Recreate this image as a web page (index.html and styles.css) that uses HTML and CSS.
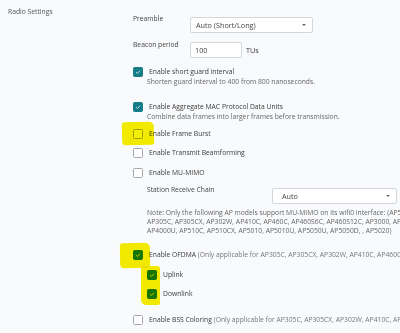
FILE: index.html
```
<!DOCTYPE html>
<html lang="en">
<head>
    <meta charset="UTF-8">
    <title>Radio Settings</title>
    <link rel="stylesheet" href="styles.css">
</head>
<body>
<div class="page">
    <div class="section">
        <div class="section-title">Radio Settings</div>
        <div class="fields">
            <div class="field field-first">
                <div class="field-label">Preamble</div>
                <div class="select select-preamble">Auto (Short/Long)<span class="caret"></span></div>
            </div>
            <div class="field">
                <div class="field-label">Beacon period</div>
                <div class="input">100</div>
                <span class="unit">TUs</span>
            </div>

            <div class="check check-guard">
                <span class="box checked"><svg viewBox="0 0 10 10"><path d="M2.6 5.2 L4.3 6.8 L7.5 3.4"/></svg></span>
                <span class="check-text">Enable short guard interval</span>
            </div>
            <div class="desc">Shorten guard interval to 400 from 800 nanoseconds.</div>

            <div class="check check-ampdu">
                <span class="box checked"><svg viewBox="0 0 10 10"><path d="M2.6 5.2 L4.3 6.8 L7.5 3.4"/></svg></span>
                <span class="check-text">Enable Aggregate MAC Protocol Data Units</span>
            </div>
            <div class="desc">Combine data frames into larger frames before transmission.</div>

            <div class="check check-burst">
                <span class="box"></span>
                <span class="check-text">Enable Frame Burst</span>
            </div>
            <div class="check">
                <span class="box"></span>
                <span class="check-text">Enable Transmit Beamforming</span>
            </div>
            <div class="check check-mimo">
                <span class="box"></span>
                <span class="check-text">Enable MU-MIMO</span>
            </div>

            <div class="field field-sub">
                <div class="field-label field-label-wide">Station Receive Chain</div>
                <div class="select select-chain">Auto<span class="caret"></span></div>
            </div>
            <div class="note">
                Note: Only the following AP models support MU-MIMO on its wifi0 interface: (AP550, AP510C,<br>
                AP305C, AP305CX, AP302W, AP410C, AP460C, AP460S6C, AP460S12C, AP3000, AP3000C,<br>
                AP4000U, AP510C, AP510CX, AP5010, AP5010U, AP5050U, AP5050D, , AP5020)
            </div>

            <div class="check check-ofdma">
                <span class="box checked"><svg viewBox="0 0 10 10"><path d="M2.6 5.2 L4.3 6.8 L7.5 3.4"/></svg></span>
                <span class="check-text">Enable OFDMA <span class="hint">(Only applicable for AP305C, AP305CX, AP302W, AP410C, AP460C, AP460S6C)</span></span>
            </div>
            <div class="check check-nested">
                <span class="box checked"><svg viewBox="0 0 10 10"><path d="M2.6 5.2 L4.3 6.8 L7.5 3.4"/></svg></span>
                <span class="check-text">Uplink</span>
            </div>
            <div class="check check-nested check-down">
                <span class="box checked"><svg viewBox="0 0 10 10"><path d="M2.6 5.2 L4.3 6.8 L7.5 3.4"/></svg></span>
                <span class="check-text">Downlink</span>
            </div>

            <div class="check check-bss">
                <span class="box"></span>
                <span class="check-text">Enable BSS Coloring <span class="hint">(Only applicable for AP305C, AP305CX, AP302W, AP410C, AP460C)</span></span>
            </div>
        </div>
    </div>

    <!-- highlighter marks drawn over the screenshot -->
    <div class="marker marker-burst"></div>
    <div class="marker marker-ofdma"></div>
    <div class="marker marker-links"></div>
</div>
</body>
</html>
```

FILE: styles.css
```
html, body {
    margin: 0;
    padding: 0;
}
body {
    width: 400px;
    height: 333px;
    overflow: hidden;
    background-color: #f9fafc;
    font-family: "Open Sans", "Noto Sans", sans-serif;
    font-size: 6.75px;
    color: #3a3a3a;
}
.page {
    position: relative;
    width: 400px;
    height: 333px;
    overflow: hidden;
}
.section {
    display: flex;
    padding: 7px 0 0 8px;
}
.section-title {
    width: 125px;
    flex-shrink: 0;
    line-height: 10px;
    color: #555;
}
.fields {
    display: flex;
    flex-direction: column;
    white-space: nowrap;
}
.field {
    display: flex;
    align-items: flex-start;
    margin-top: 7px;
}
.field-label {
    width: 57px;
    flex-shrink: 0;
    line-height: 10px;
    color: #444;
}
.field-label-wide {
    width: 125px;
}
.select, .input {
    box-sizing: border-box;
    height: 16px;
    line-height: 14px;
    border: 1px solid #d3d6da;
    border-radius: 2px;
    background: #fff;
    color: #444;
    font-size: 7.25px;
    position: relative;
}
.select {
    margin-top: 3px;
    padding-left: 5px;
}
.select-preamble {
    width: 123px;
}
.select-chain {
    width: 125px;
    padding-left: 9px;
}
.caret {
    position: absolute;
    right: 6px;
    top: 6px;
    width: 0;
    height: 0;
    border-left: 2px solid transparent;
    border-right: 2px solid transparent;
    border-top: 2.5px solid #666;
}
.input {
    width: 52px;
    margin-top: 2px;
    padding-left: 4px;
}
.unit {
    margin: 5px 0 0 4px;
    line-height: 10px;
    font-size: 7.25px;
}
.check {
    display: flex;
    align-items: center;
    height: 10px;
    margin-top: 9px;
}
.box {
    box-sizing: border-box;
    width: 10px;
    height: 10px;
    border: 1px solid #a4a8ad;
    border-radius: 1.5px;
    background: #fff;
    margin-right: 6px;
    flex-shrink: 0;
}
.box.checked {
    background: #167c88;
    border-color: #167c88;
}
.box svg {
    display: block;
    width: 8px;
    height: 8px;
}
.box svg path {
    fill: none;
    stroke: #fff;
    stroke-width: 0.9;
}
.check-text {
    line-height: 10px;
}
.hint {
    color: #777;
}
.desc {
    line-height: 10px;
    padding-left: 14px;
    color: #666;
}
.check-guard {
    margin-top: 9px;
}
.check-ampdu {
    margin-top: 15px;
}
.check-burst {
    margin-top: 7px;
}
.check-mimo {
    margin-top: 10px;
}
.field-sub {
    padding-left: 14px;
    margin-top: 7px;
}
.note {
    margin-top: 4px;
    padding-left: 14px;
    line-height: 9px;
    color: #666;
}
.check-ofdma {
    margin-top: 15px;
}
.check-nested {
    padding-left: 14px;
    margin-top: 10px;
}
.check-down {
    margin-top: 9px;
}
.check-bss {
    margin-top: 16px;
}
.marker {
    position: absolute;
    background: #f7ef00;
    mix-blend-mode: multiply;
    border-radius: 3px 5px 2px 4px;
}
.marker-burst {
    left: 122px;
    top: 122px;
    width: 32px;
    height: 23px;
    transform: rotate(-1.5deg);
}
.marker-ofdma {
    left: 120px;
    top: 243px;
    width: 30px;
    height: 25px;
    transform: rotate(-1deg);
}
.marker-links {
    left: 141px;
    top: 266px;
    width: 19px;
    height: 39px;
    border-radius: 2px 3px 2px 5px;
}
```
